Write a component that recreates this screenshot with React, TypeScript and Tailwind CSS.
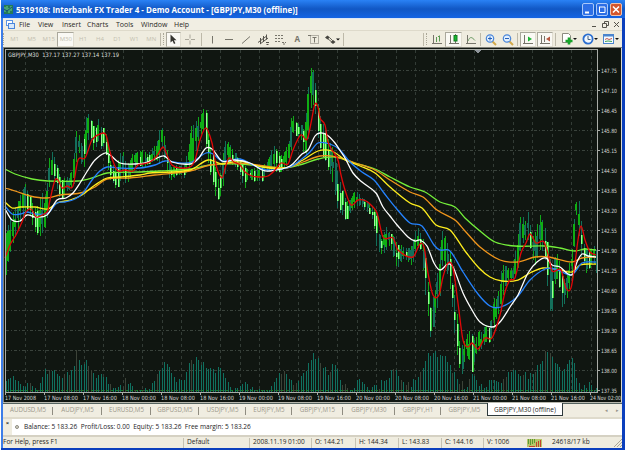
import type { ReactNode } from 'react';
import clsx from 'clsx';

type Point = [number, number];

const timeframes = ['M1', 'M5', 'M15', 'M30', 'H1', 'H4', 'D1', 'W1', 'MN'];

const menuItems = [
  { label: 'File', className: 'w-[19px]' },
  { label: 'View', className: 'w-[24px]' },
  { label: 'Insert', className: 'w-[25px]' },
  { label: 'Charts', className: 'w-[29px]' },
  { label: 'Tools', className: 'w-[25px]' },
  { label: 'Window', className: 'w-[33px]' },
  { label: 'Help', className: 'w-[20px]' },
];

const tabs = [
  { label: 'AUDUSD,M5', className: 'w-[50px]' },
  { label: 'AUDJPY,M5', className: 'w-[49px]' },
  { label: 'EURUSD,M5', className: 'w-[49px]' },
  { label: 'GBPUSD,M5', className: 'w-[48px]' },
  { label: 'USDJPY,M5', className: 'w-[47px]' },
  { label: 'EURJPY,M5', className: 'w-[46px]' },
  { label: 'GBPJPY,M15', className: 'w-[51px]' },
  { label: 'GBPJPY,M30', className: 'w-[52px]' },
  { label: 'GBPJPY,H1', className: 'w-[46px]' },
  { label: 'GBPJPY,M5', className: 'w-[46px]' },
];

const prices = [
  '147.75', '147.10', '146.45', '145.80', '145.15', '144.50', '143.85', '143.20', '142.55',
  '141.90', '141.25', '140.60', '139.95', '139.30', '138.65', '138.00', '137.35',
];

const times = [
  '17 Nov 2008', '17 Nov 08:00', '17 Nov 16:00', '18 Nov 00:00', '18 Nov 08:00', '18 Nov 16:00',
  '19 Nov 00:00', '19 Nov 08:00', '19 Nov 16:00', '20 Nov 00:00', '20 Nov 08:00', '20 Nov 16:00',
  '21 Nov 00:00', '21 Nov 08:00', '21 Nov 16:00', '24 Nov 02:00',
];

// x, high, low
const range: [number, number, number][] = [
  [5, 235, 277], [8, 225, 262], [12, 213, 245], [15, 208, 238], [18, 200, 228], [20, 195, 222],
  [25, 184, 216], [28, 193, 212], [30, 197, 216], [33, 205, 228], [36, 210, 235], [40, 196, 236],
  [43, 192, 232], [46, 200, 225], [48, 165, 210], [50, 155, 178], [52, 152, 175], [55, 158, 180],
  [58, 170, 195], [61, 180, 200], [64, 178, 195], [67, 177, 190], [70, 178, 190], [73, 165, 185],
  [75, 135, 183], [77, 128, 150], [80, 140, 155], [82, 145, 170], [85, 125, 165], [87, 110, 145],
  [90, 118, 135], [92, 122, 150], [95, 130, 150], [98, 118, 140], [101, 128, 150], [104, 128, 145],
  [107, 140, 165], [110, 160, 180], [113, 165, 183], [116, 168, 190], [119, 155, 185], [122, 150, 175],
  [126, 165, 185], [130, 160, 178], [133, 153, 172], [138, 152, 165], [142, 150, 168], [148, 155, 165],
  [152, 148, 162], [156, 145, 160], [159, 130, 165], [162, 128, 145], [165, 140, 165], [168, 160, 178],
  [172, 168, 180], [176, 165, 176], [180, 166, 174], [184, 165, 178], [188, 148, 168], [191, 126, 165],
  [194, 125, 160], [197, 118, 145], [200, 115, 135], [203, 109, 130], [206, 110, 150], [209, 145, 170],
  [212, 150, 180], [215, 165, 195], [218, 180, 200], [221, 170, 195], [224, 140, 178], [228, 142, 162],
  [232, 148, 165], [236, 155, 168], [240, 160, 175], [244, 165, 190], [248, 170, 177], [254, 168, 182],
  [258, 165, 180], [262, 165, 182], [266, 163, 172], [270, 155, 170], [273, 145, 170], [277, 150, 172],
  [281, 155, 172], [285, 150, 168], [289, 140, 160], [291, 118, 150], [293, 115, 132], [297, 125, 138],
  [300, 123, 136], [303, 130, 152], [306, 110, 155], [308, 88, 140], [310, 67, 108], [313, 70, 105],
  [315, 80, 110], [318, 105, 140], [321, 120, 155], [325, 130, 160], [328, 140, 172], [331, 145, 175],
  [334, 150, 190], [338, 175, 212], [342, 190, 215], [346, 202, 222], [350, 200, 212], [354, 192, 208],
  [358, 192, 205], [362, 198, 207], [366, 200, 212], [370, 205, 215], [373, 207, 222], [376, 212, 245],
  [379, 235, 252], [382, 240, 255], [385, 225, 252], [389, 233, 245], [393, 235, 255], [397, 245, 270],
  [401, 245, 262], [404, 248, 258], [408, 248, 262], [412, 245, 266], [415, 232, 255], [418, 228, 248],
  [421, 234, 250], [424, 243, 285], [427, 275, 310], [430, 307, 337], [433, 295, 325], [436, 288, 306],
  [439, 255, 310], [441, 235, 275], [443, 229, 260], [446, 242, 268], [449, 245, 285], [452, 283, 307],
  [456, 303, 350], [459, 340, 367], [462, 345, 375], [465, 340, 358], [468, 330, 355], [472, 335, 374],
  [475, 343, 356], [478, 330, 352], [482, 333, 348], [485, 323, 342], [490, 330, 344], [494, 293, 326],
  [497, 302, 315], [501, 270, 312], [504, 264, 290], [508, 268, 280], [513, 268, 280], [517, 240, 275],
  [521, 213, 246], [525, 222, 240], [528, 211, 240], [532, 237, 257], [534, 235, 268], [540, 215, 250],
  [544, 224, 252], [548, 247, 295], [551, 270, 325], [554, 258, 285], [558, 253, 277], [562, 275, 308],
  [565, 280, 303], [568, 270, 294], [572, 246, 276], [573, 226, 260], [577, 198, 208], [580, 203, 252],
  [583, 243, 263], [587, 250, 275], [590, 252, 265], [593, 245, 262], [596, 250, 273],
];

// x, top of the bar
const volume: Point[] = [
  [5, 380], [15, 376], [20, 382], [30, 380], [38, 386], [45, 368], [52, 368], [60, 374], [70, 370],
  [74, 366], [76, 350], [79, 362], [84, 361], [88, 360], [95, 374], [102, 371], [105, 375], [112, 386],
  [120, 386], [125, 377], [135, 385], [145, 388], [155, 378], [162, 364], [168, 360], [175, 378],
  [185, 374], [190, 358], [200, 358], [207, 366], [213, 368], [221, 367], [226, 380], [235, 388],
  [243, 379], [255, 388], [270, 388], [276, 374], [284, 371], [295, 384], [308, 363], [312, 351],
  [320, 358], [328, 374], [334, 361], [342, 380], [350, 388], [357, 378], [370, 388], [378, 384],
  [385, 378], [395, 365], [400, 374], [410, 384], [420, 370], [427, 353], [435, 351], [445, 353],
  [455, 373], [465, 385], [472, 374], [485, 385], [492, 377], [502, 379], [512, 365], [520, 371],
  [530, 374], [540, 362], [545, 350], [551, 352], [560, 367], [573, 358], [578, 384], [590, 383],
  [597, 385],
];

const averages = [
  {
    color: '#74f03a',
    points:
      '5,169 15,174 32,179 48,181 78,181 95,177 107,173 140,172 160,171 190,169 210,165 240,164 285,168 303,164 318,159 335,157 355,163 375,169 390,177 410,187 425,192 440,202 455,207 465,218 480,231 495,242 515,246 545,246 560,248 575,251 585,249 596,250',
  },
  {
    color: '#f0961c',
    points:
      '5,188 15,191 30,196 47,198 60,195 80,193 95,187 107,179 130,178 155,175 190,171 210,165 240,163 285,168 303,162 320,156 337,157 355,163 375,170 390,180 410,192 423,197 437,210 455,220 465,231 480,247 500,260 518,262 535,257 548,257 572,262 582,258 596,257',
  },
  {
    color: '#ffee1e',
    points:
      '5,202 12,208 20,207 35,207 48,209 57,203 70,200 82,195 95,185 107,178 120,177 140,175 150,173 190,170 208,160 222,164 240,161 262,167 285,168 303,160 318,151 332,151 345,160 360,166 375,173 390,187 410,203 422,208 436,225 450,230 465,251 479,268 490,277 502,281 518,280 530,273 543,268 560,270 572,272 580,265 596,264',
  },
  {
    color: '#2583ff',
    points:
      '5,206 12,214 20,214 27,212 35,214 48,213 57,203 65,202 75,199 83,193 92,180 100,171 107,167 118,168 140,168 155,165 165,161 180,163 192,162 206,153 213,154 222,161 240,159 255,166 268,170 290,167 303,158 310,152 318,143 330,144 340,150 350,162 362,172 374,180 384,193 396,208 410,223 422,226 434,245 440,250 450,251 463,272 478,294 490,306 501,307 517,297 530,280 545,269 555,269 570,275 575,272 582,263 596,262',
  },
  {
    color: '#ffffff',
    points:
      '5,209 12,220 20,221 27,215 35,217 47,215 57,200 66,198 73,193 80,183 88,170 95,160 105,153 110,155 120,163 135,164 145,163 155,159 164,156 172,162 190,164 198,159 206,148 212,149 222,161 235,160 250,163 262,170 270,171 290,166 302,154 308,150 315,136 320,133 327,135 335,143 341,152 345,158 353,173 362,182 376,193 383,207 390,216 398,226 408,237 415,241 420,240 427,246 434,263 440,270 448,264 453,267 463,293 472,310 480,322 492,327 500,322 510,307 518,295 528,273 537,262 546,258 552,265 560,267 568,274 573,274 577,262 582,254 588,256 596,257',
  },
  {
    color: '#e00808',
    points:
      '5,258 10,245 16,235 22,222 26,212 31,209 36,217 40,216 46,213 48,210 50,200 55,180 58,180 62,188 67,186 73,186 78,160 85,158 92,140 100,134 106,135 110,152 117,170 125,170 133,171 138,165 143,164 150,162 157,156 163,147 167,155 172,165 180,168 190,167 195,160 200,140 206,128 212,143 216,165 222,178 226,165 229,158 234,162 240,165 245,172 252,176 260,177 268,176 275,170 281,163 288,164 293,150 299,137 302,135 306,140 308,137 311,123 315,104 318,107 320,118 325,125 328,142 334,153 338,160 341,175 345,190 351,205 358,200 366,201 372,206 377,213 383,237 393,238 398,250 413,257 420,244 424,247 428,273 433,295 439,295 443,277 448,263 453,268 458,303 463,340 468,347 472,343 478,349 485,338 492,338 500,315 505,292 510,280 515,278 521,253 526,243 530,234 536,243 544,242 549,258 552,271 561,270 566,288 571,288 575,263 578,240 581,226 585,240 590,252 596,255',
  },
];

const BAR_STEP = 2.44;
const bars = Array.from({ length: 243 }, (_, i) => 5.5 + i * BAR_STEP);

// Small repeatable variation from bar to bar
function noise(i: number) {
  const n = Math.sin(i * 127.1) * 43758.5453;
  return n - Math.floor(n);
}

function interpolate(points: number[][], x: number, column: number) {
  const next = points.findIndex((p) => p[0] >= x);
  if (next === -1) return points[points.length - 1][column];
  if (next === 0) return points[0][column];
  const a = points[next - 1];
  const b = points[next];
  return a[column] + ((b[column] - a[column]) * (x - a[0])) / (b[0] - a[0]);
}

// Catmull-Rom spline through the points
function smoothPath(points: string) {
  const p = points.split(' ').map((pair) => pair.split(',').map(Number));
  let d = `M${p[0][0]} ${p[0][1]}`;
  for (let i = 0; i < p.length - 1; i++) {
    const a = p[Math.max(i - 1, 0)];
    const b = p[i];
    const c = p[i + 1];
    const e = p[Math.min(i + 2, p.length - 1)];
    d += `C${b[0] + (c[0] - b[0]) / 3} ${b[1] + (((c[1] - a[1]) / (c[0] - a[0])) * (c[0] - b[0])) / 3}`;
    d += ` ${c[0] - (c[0] - b[0]) / 3} ${c[1] - (((e[1] - b[1]) / (e[0] - b[0])) * (c[0] - b[0])) / 3}`;
    d += ` ${c[0]} ${c[1]}`;
  }
  return d;
}

function Candle({ x, index }: { x: number; index: number }) {
  const high = interpolate(range, x, 1);
  const low = interpolate(range, x, 2);
  const size = low - high;
  const top = high + size * noise(index) * 0.45;
  const bottom = low - size * noise(index + 500) * 0.45;
  const before = interpolate(range, x - 4, 1) + interpolate(range, x - 4, 2);
  const falling = high + low - before + (noise(index + 90) - 0.5) * 14 > 0;
  const left = Math.round(x);
  const teal = noise(index + 900) > 0.75;

  return (
    <g>
      <rect x={left} y={high} width={1} height={size} fill={noise(index + 40) > 0.5 ? '#12705a' : '#10a818'} />
      <rect
        x={left - (falling ? 0 : 1)}
        y={top}
        width={2}
        height={Math.max(bottom - top, 2)}
        fill={teal ? '#14705c' : falling ? '#1fc42a' : '#0fae14'}
      />
      {falling && !teal && <rect x={left} y={top} width={1} height={Math.max(bottom - top, 2)} fill="#9dfb9a" />}
    </g>
  );
}

function Chart() {
  return (
    <svg
      className="block shrink-0"
      width={619}
      height={356}
      viewBox="3 47 619 356"
      fontFamily="'DejaVu Sans', sans-serif"
      shapeRendering="crispEdges"
    >
      <rect x={3} y={47} width={619} height={356} fill="#808078" />
      <rect x={4} y={48} width={618} height={354} fill="#101611" />
      <rect x={620.5} y={48} width={1.5} height={355} fill="#d8d8d0" />
      <rect x={3} y={402} width={619} height={1} fill="#b8b8ae" />

      {/* Grid */}
      {prices.map((price, i) => (
        <line key={price} x1={6} x2={597} y1={70.5 + i * 20} y2={70.5 + i * 20} stroke="#3a433c" strokeDasharray="3 2 1 2" />
      ))}
      {Array.from({ length: 30 }, (_, i) => Math.round(25 + i * 19.5) + 0.5).map((x) => (
        <line key={x} x1={x} x2={x} y1={50} y2={392} stroke="#333c36" strokeDasharray="3 3" />
      ))}

      {/* Volume */}
      {bars.map((x, i) => {
        const top = Math.min(interpolate(volume, x, 1) + noise(i + 7) * 7 - 1, 390);
        return (
          <rect key={x} x={Math.round(x)} y={top} width={1} height={392 - top} fill={noise(i + 31) > 0.82 ? '#3c4338' : '#10705f'} />
        );
      })}
      <line x1={6} x2={597} y1={390.5} y2={390.5} stroke="#15811f" strokeDasharray="2 3" />

      {bars.map((x, i) => (
        <Candle key={x} x={x} index={i} />
      ))}

      {averages.map(({ color, points }) => (
        <path key={color} d={smoothPath(points)} fill="none" stroke={color} strokeWidth={1.3} shapeRendering="auto" />
      ))}

      {/* Axes */}
      <path d="M5.5 393V49.500H597.5V392.500H5" fill="none" stroke="#a9aca7" />
      <path d="M474.500 50h7l-3.500 3z" fill="#8f959b" />
      <text x={8} y={57} fontSize={6} fill="#dcdfdb" textLength={111} lengthAdjust="spacingAndGlyphs">
        GBPJPY,M30&#160; 137.17 137.27 137.14 137.19
      </text>
      {prices.map((price, i) => (
        <g key={price}>
          <rect x={597} y={70 + i * 20} width={3} height={1} fill="#a9aca7" />
          <text x={601} y={72.5 + i * 20} fontSize={5.8} fill="#d6d9d5" textLength={16} lengthAdjust="spacingAndGlyphs">
            {price}
          </text>
        </g>
      ))}
      {times.map((time, i) => (
        <g key={time}>
          <rect x={Math.round(5 + i * 39)} y={392} width={1} height={3} fill="#a9aca7" />
          <text
            x={5 + i * 39}
            y={400}
            fontSize={5.8}
            fill="#d6d9d5"
            textLength={i === 0 || i === times.length - 1 ? 31 : 34}
            lengthAdjust="spacingAndGlyphs"
          >
            {time}
          </text>
        </g>
      ))}
    </svg>
  );
}

function Icon({ children, color = '#77756b' }: { children: ReactNode; color?: string }) {
  return (
    <svg width={14} height={13} viewBox="0 0 14 13" fill="none" stroke={color} className="shrink-0">
      {children}
    </svg>
  );
}

function ToolButton({ children, pressed, className = 'w-[17px]' }: { children: ReactNode; pressed?: boolean; className?: string }) {
  return (
    <div
      className={clsx(
        'flex h-[15px] shrink-0 items-center justify-center',
        pressed && 'border border-t-[#aaa89c] border-r-[#e0ddd0] border-b-[#e0ddd0] border-l-[#aaa89c] bg-[#faf9f4]',
        className,
      )}
    >
      {children}
    </div>
  );
}

function Separator({ className = 'mx-[1px]' }: { className?: string }) {
  return <div className={clsx('h-[13px] w-px shrink-0 bg-[#bdb9a9]', className)} />;
}

function Grip() {
  return <div className="h-[12px] w-[2px] shrink-0 border-l border-dotted border-[#aaa797]" />;
}

function TitleBar() {
  return (
    <div className="flex h-[18px] shrink-0 items-center bg-linear-to-b from-[#2a82f5] via-[#1157c4] to-[#1464e4] pt-px pr-[3px] pl-[3px]">
      <svg width={9} height={9} viewBox="0 0 9 9" className="shrink-0">
        <rect width={9} height={9} fill="#247a58" />
        <path d="M1 7V2M3 5V1M5 8V3M7 6V1" stroke="#6dd08c" />
        <path d="M0 4L3 6L8 2" stroke="#184f78" fill="none" />
      </svg>
      <span className="ml-[3px] text-[8px] leading-none font-bold text-white">
        5319108: Interbank FX Trader 4 - Demo Account - [GBPJPY,M30 (offline)]
      </span>
      <div className="ml-auto flex gap-[2px]">
        <svg width={12} height={13} viewBox="0 0 12 13">
          <rect x={0.5} y={0.5} width={11} height={12} rx={1.5} fill="#2d6fe6" stroke="#a9c8fa" />
          <path d="M3 9.500h4" stroke="#fff" strokeWidth={2} />
        </svg>
        <svg width={12} height={13} viewBox="0 0 12 13">
          <rect x={0.5} y={0.5} width={11} height={12} rx={1.5} fill="#2d6fe6" stroke="#a9c8fa" />
          <path d="M3 4h6M3.500 4v5.500h5.500V4" stroke="#fff" fill="none" />
        </svg>
        <svg width={12} height={13} viewBox="0 0 12 13">
          <rect x={0.5} y={0.5} width={11} height={12} rx={1.5} fill="#d4562c" stroke="#f0c0a8" />
          <path d="M3 3.500l6 6M9 3.500l-6 6" stroke="#fff" strokeWidth={1.6} />
        </svg>
      </div>
    </div>
  );
}

function MenuBar() {
  return (
    <div className="flex h-[12px] shrink-0 items-center border-t border-[#dce6f6] bg-[#f1eee3] pl-[3px] text-[7px] leading-none text-[#2a2925]">
      <svg width={9} height={9} viewBox="0 0 9 9" className="mr-[4px] shrink-0">
        <rect x={0.5} y={0.5} width={6} height={5} fill="#fff" stroke="#5b94e6" />
        <rect x={2.5} y={3.5} width={6} height={5} fill="#d8e8fb" stroke="#4a86dc" />
      </svg>
      {menuItems.map(({ label, className }) => (
        <span key={label} className={clsx('shrink-0', className)}>
          {label}
        </span>
      ))}
      <svg width={32} height={9} viewBox="0 0 32 9" fill="none" stroke="#55534b" className="ml-auto">
        <path d="M2 6.500h4" />
        <path d="M12.500 3.500h4v4h-4zM14.500 3V1.500h4v4h-2" />
        <path d="M24 2l5 5M29 2l-5 5" />
      </svg>
    </div>
  );
}

function Toolbar() {
  return (
    <div className="flex h-[17px] shrink-0 items-center border-t border-[#dedacb] bg-[#efecdf] text-[6px] leading-none text-[#c3bfb0]">
      <Grip />
      <div className="ml-[1px] flex">
        {timeframes.map((timeframe) => (
          <ToolButton key={timeframe} pressed={timeframe === 'M30'} className="w-[17.1px]">
            {timeframe}
          </ToolButton>
        ))}
      </div>
      <Separator className="mr-[2px]" />
      <Grip />
      <ToolButton pressed className="ml-px w-[15px]">
        <Icon>
          <path d="M4.500 1.500v8l2-1.800 1.500 3.300 1.400-.7-1.500-3.100h2.600z" fill="#35342f" stroke="none" />
        </Icon>
      </ToolButton>
      <ToolButton className="w-[19px]">
        <Icon color="#aaa79b">
          <path d="M7 1.500v4M7 7.500v4M2 6.500h4M8 6.500h4" />
        </Icon>
      </ToolButton>
      <Separator />
      <ToolButton className="w-[18px]">
        <Icon>
          <path d="M7.500 3v7.500" />
        </Icon>
      </ToolButton>
      <ToolButton>
        <Icon>
          <path d="M3 6.500h8" />
        </Icon>
      </ToolButton>
      <ToolButton>
        <Icon>
          <path d="M3 10.500l8-7" />
        </Icon>
      </ToolButton>
      <ToolButton>
        <Icon color="#55534c">
          <path d="M2 9.500l8-6M4 11l8-6M4.500 5v6M7.500 3v6M10.500 1.500v5M10 9.500h3M10.500 11.500h2" />
        </Icon>
      </ToolButton>
      <ToolButton>
        <Icon>
          <path d="M2 2.500h9M2 5.500h9M2 8.500h6M9 9.500h4M10 11h2" strokeDasharray="2 1" />
        </Icon>
      </ToolButton>
      <ToolButton>
        <span className="text-[8px] font-bold text-[#77756b]">A</span>
      </ToolButton>
      <ToolButton>
        <Icon>
          <rect x={3.5} y={2.5} width={8} height={8} strokeDasharray="1 1" />
          <path d="M1 2.500h3M5.500 4.500h4M7.500 4.500v5" />
        </Icon>
      </ToolButton>
      <ToolButton className="w-[19px]">
        <svg width={17} height={13} viewBox="0 0 17 13" fill="#46453f">
          <path d="M1 4.500L3.500 2.500 6 4.500 3.500 6.500zM6.500 9L9 7l2.500 2L9 11z" />
          <path d="M4 6l4 3M6 5l3 3" stroke="#66645b" />
          <path d="M12 5.500h4l-2 2z" fill="#111" />
        </svg>
      </ToolButton>
      <Separator />

      <div className="ml-auto flex items-center pr-[1px]">
        <Separator className="mr-[2px]" />
        <Grip />
        <ToolButton>
          <Icon>
            <path d="M3.500 2v9M2 10.500h10" />
            <path d="M6.500 4v5M9.500 2.500v6M8 3.500h1.500" stroke="#5c9953" />
          </Icon>
        </ToolButton>
        <ToolButton pressed>
          <Icon>
            <path d="M3.500 2v9M2 10.500h10M8.500 1v9" />
            <rect x={7} y={2.5} width={3} height={5.5} fill="#14b72c" stroke="#167b22" />
          </Icon>
        </ToolButton>
        <ToolButton>
          <Icon>
            <path d="M3.500 2v9M2 10.500h10" />
            <path d="M4 8c2-5 4-4 7-.5" stroke="#6d9c66" />
          </Icon>
        </ToolButton>
        <Separator />
        <ToolButton>
          <Icon color="#4b86d8">
            <path d="M8 8l4 4" stroke="#d1a94a" strokeWidth={2} />
            <circle cx={6} cy={5.5} r={3.7} fill="#e0efff" strokeWidth={1.2} />
            <path d="M4 5.500h4M6 3.500v4" stroke="#245fb8" />
          </Icon>
        </ToolButton>
        <ToolButton>
          <Icon color="#4b86d8">
            <path d="M8 8l4 4" stroke="#d1a94a" strokeWidth={2} />
            <circle cx={6} cy={5.5} r={3.7} fill="#e0efff" strokeWidth={1.2} />
            <path d="M4 5.500h4" stroke="#245fb8" />
          </Icon>
        </ToolButton>
        <Separator />
        <ToolButton pressed className="ml-[1px] w-[16px]">
          <Icon>
            <path d="M3.500 2v9M2 10.500h10" />
            <path d="M7 3.500v5l4-2.500z" fill="#1db534" stroke="none" />
          </Icon>
        </ToolButton>
        <ToolButton pressed className="ml-[1px] w-[16px]">
          <Icon>
            <path d="M3.500 2v9M2 10.500h10M6.500 3v6" />
            <path d="M12 3.500v5L8 6z" fill="#b95840" stroke="none" />
          </Icon>
        </ToolButton>
        <Separator className="mr-[2px] ml-[2px]" />
        <ToolButton className="w-[21px]">
          <svg width={18} height={14} viewBox="0 0 18 14">
            <path d="M2.500 1.500h6l2 2v7h-8z" fill="#fff" stroke="#8d8b80" />
            <path d="M9 5.500v7M5.500 9h7" stroke="#17a52a" strokeWidth={2.6} />
            <path d="M13 6h4l-2 2z" fill="#111" />
          </svg>
        </ToolButton>
        <ToolButton className="w-[21px]">
          <svg width={18} height={14} viewBox="0 0 18 14">
            <circle cx={7} cy={7} r={4.6} fill="#f2f8ff" stroke="#2c6fd0" strokeWidth={1.8} />
            <path d="M7 4v3.500h2.500" fill="none" stroke="#47627e" />
            <path d="M13 6h4l-2 2z" fill="#111" />
          </svg>
        </ToolButton>
        <ToolButton className="w-[21px]">
          <svg width={18} height={14} viewBox="0 0 18 14">
            <rect x={1.5} y={2.5} width={10} height={9} fill="#f5faff" stroke="#4b84cd" />
            <path d="M1.500 3.500h10" stroke="#4b84cd" strokeWidth={2} />
            <path d="M3 7.500l2-1 2 1 3-1" fill="none" stroke="#c0574b" />
            <path d="M3 9.500l3-.5 4 .5" fill="none" stroke="#3da053" />
            <path d="M13 6h4l-2 2z" fill="#111" />
          </svg>
        </ToolButton>
      </div>
    </div>
  );
}

function ChartTabs() {
  return (
    <div className="flex h-[14px] shrink-0 border-t border-[#55635f] bg-[#f0ede1] text-[6.2px] leading-none text-[#9b978a]">
      {tabs.map(({ label, className }, i) => (
        <div key={label} className={clsx('flex shrink-0 items-center justify-center', className)}>
          <span className="grow pl-px text-center">{label}</span>
          {i < tabs.length - 1 && <span className="h-[8px] w-px bg-[#8f8c80]" />}
        </div>
      ))}
      <div className="-mt-px flex h-[13px] w-[76px] shrink-0 items-center justify-center border border-t-0 border-[#2f3a3c] bg-white pt-[2px] text-[6.5px] text-[#1e1e1c]">
        GBPJPY,M30 (offline)
      </div>
      <div className="ml-auto flex items-center gap-[8px] pr-[3px] text-[5px] text-[#96938a]">
        <span>◂</span>
        <span>▸</span>
      </div>
    </div>
  );
}

function AccountBar() {
  return (
    <div className="flex h-[20px] shrink-0 border-t-2 border-b-2 border-t-[#dfdbcc] border-b-[#d5d1c3] bg-white text-[6.55px] leading-none text-[#24231f]">
      <div className="flex w-[9px] justify-center bg-[#efecdf] pt-[1px] text-[6px] font-bold">×</div>
      <div className="flex grow items-center">
        <span className="mr-[5px] ml-[3px] size-[4px] rounded-full border border-[#8d8b80] bg-[#d9d7cb]" />
        Balance: 5 183.26&nbsp; Profit/Loss: 0.00&nbsp; Equity: 5 183.26&nbsp; Free margin: 5 183.26
      </div>
    </div>
  );
}

function StatusCell({ children, className }: { children: ReactNode; className: string }) {
  return (
    <div className={clsx('flex h-[10px] shrink-0 items-center border-l border-[#c6c2b3] pl-[3px]', className)}>{children}</div>
  );
}

function StatusBar() {
  return (
    <div className="flex h-[11px] shrink-0 items-center bg-[#efecdf] text-[6.55px] leading-none text-[#292824]">
      <div className="w-[180px] shrink-0">For Help, press F1</div>
      <StatusCell className="w-[66px]">Default</StatusCell>
      <StatusCell className="w-[62px]">2008.11.19 01:00</StatusCell>
      <StatusCell className="w-[44px]">O: 144.21</StatusCell>
      <StatusCell className="w-[43px]">H: 144.34</StatusCell>
      <StatusCell className="w-[43px]">L: 143.83</StatusCell>
      <StatusCell className="w-[42px]">C: 144.16</StatusCell>
      <StatusCell className="w-[44px]">V: 1006</StatusCell>
      <svg width={15} height={8} viewBox="0 0 15 8" className="mr-[10px] shrink-0">
        <rect width={15} height={8} fill="#b8c66a" />
        <path d="M1.500 0v5M3.500 0v6M5.500 0v5M7.500 0v4" stroke="#5b9a35" />
        <path d="M2 7.500h6M9.500 3v5M11.500 2v6M13.500 1v7" stroke="#c4422c" />
      </svg>
      <span>24618/17 kb</span>
      <svg width={9} height={9} viewBox="0 0 9 9" stroke="#aaa698" className="ml-auto">
        <path d="M1 9l8-8M4 9l5-5M7 9l2-2" />
      </svg>
    </div>
  );
}

export default function App() {
  return (
    <div className="h-[450px] w-[625px] overflow-hidden bg-white pl-px font-['Open_Sans','Noto_Sans',sans-serif]">
      <div className="flex h-full flex-col bg-[#0b3fbd]">
        <TitleBar />
        <div className="mr-[3px] flex h-[430px] flex-col overflow-hidden border-l-2 border-[#3c7de8] whitespace-nowrap">
          <MenuBar />
          <Toolbar />
          <Chart />
          <ChartTabs />
          <AccountBar />
          <StatusBar />
        </div>
      </div>
    </div>
  );
}
